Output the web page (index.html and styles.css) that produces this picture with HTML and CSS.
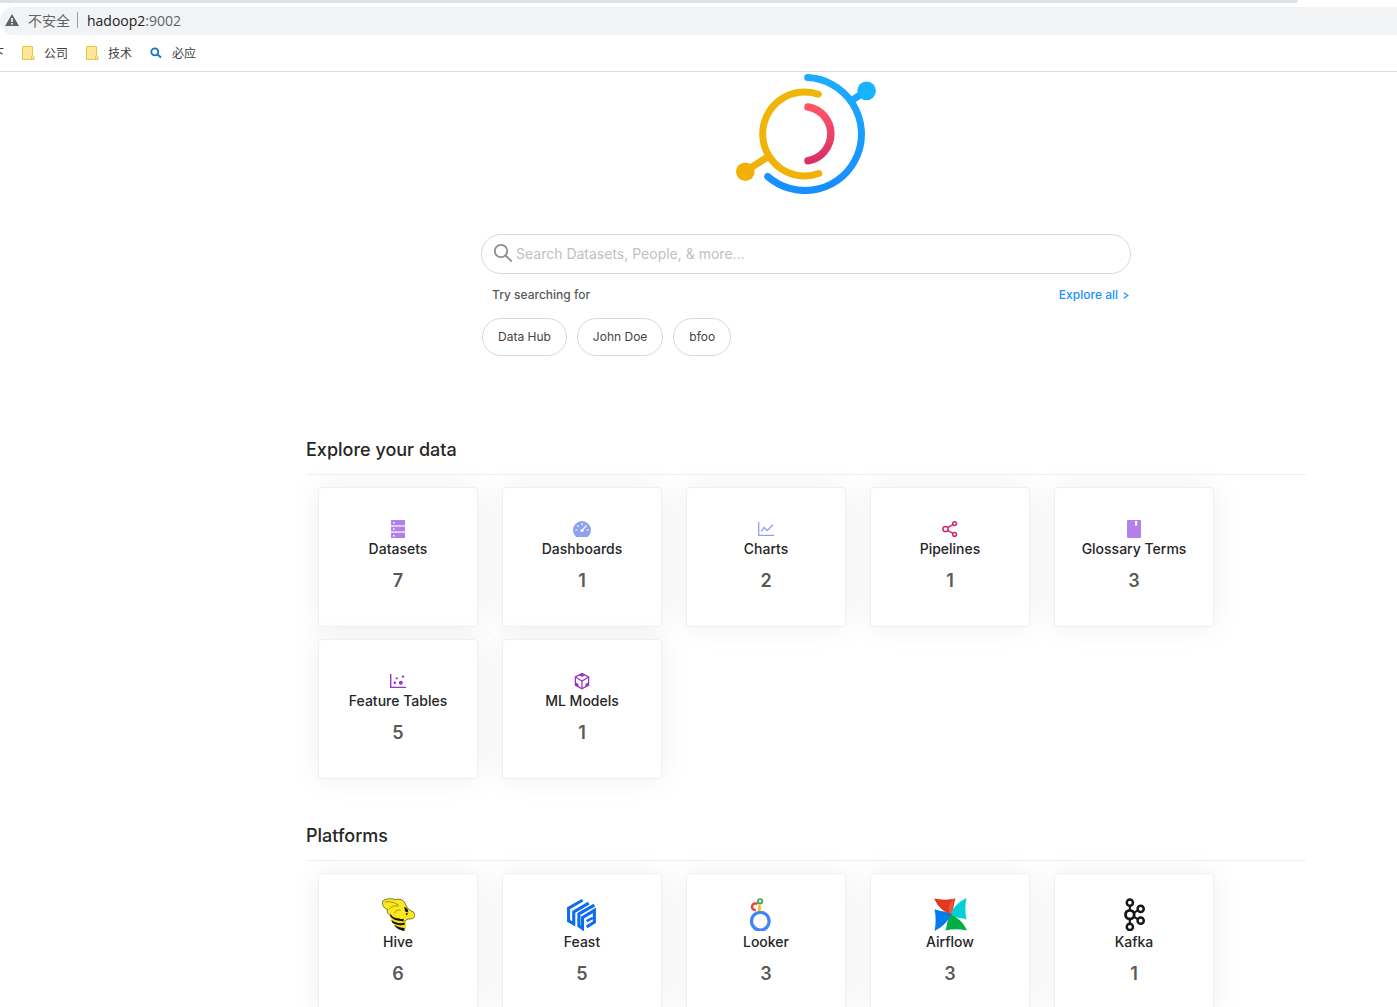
FILE: index.html
```html
<!DOCTYPE html>
<html lang="en">
<head>
<meta charset="utf-8">
<title>DataHub</title>
<link rel="stylesheet" href="styles.css">
</head>
<body>
<header class="chrome">
  <div class="tab-strip"></div>
  <div class="address-bar">
    <svg class="warn" viewBox="0 0 14 12" aria-hidden="true"><path d="M7 0 14 12H0z" fill="#5f6368"/><path d="M6.200 4h1.600v4H6.200zM6.200 9h1.600v1.500H6.200z" fill="#fff"/></svg>
    <span class="insecure">不安全</span>
    <span class="divider"></span>
    <span class="url">hadoop2<span class="port">:9002</span></span>
  </div>
  <nav class="bookmarks">
    <a class="clipped" href="#"><span>下</span></a>
    <a href="#"><svg class="folder" viewBox="0 0 14 16" aria-hidden="true"><path d="M1.500 1.500h10v9l1.500 1V14.500H1.500z" fill="#ffe694" stroke="#e8c64c"/><path d="M10.500 14v-2.500l1-1" fill="none" stroke="#e8c64c"/></svg>公司</a>
    <a href="#"><svg class="folder" viewBox="0 0 14 16" aria-hidden="true"><path d="M1.500 1.500h10v9l1.500 1V14.500H1.500z" fill="#ffe694" stroke="#e8c64c"/><path d="M10.500 14v-2.500l1-1" fill="none" stroke="#e8c64c"/></svg>技术</a>
    <a href="#"><svg class="bing" viewBox="0 0 12 12" fill="none" stroke="#1a73c4" stroke-width="1.800" aria-hidden="true"><circle cx="4.800" cy="4.800" r="3.500"/><path d="m7.500 7.500 3.500 3" stroke-width="2"/></svg>必应</a>
  </nav>
</header>

<main class="page">
  <svg class="logo" viewBox="0 0 140 120" fill="none" stroke-width="7" stroke-linecap="round" role="img" aria-label="DataHub">
    <defs>
      <linearGradient id="blue" x1="0" y1="0" x2="0" y2="1"><stop offset="0" stop-color="#1cacff"/><stop offset="1" stop-color="#198eff"/></linearGradient>
      <linearGradient id="red" x1="0" y1="0" x2="0" y2="1"><stop offset="0" stop-color="#ff5565"/><stop offset="1" stop-color="#da2f67"/></linearGradient>
      <linearGradient id="gold" x1="0" y1="0" x2="0" y2="1"><stop offset="0" stop-color="#edb70a"/><stop offset="1" stop-color="#f2b108"/></linearGradient>
    </defs>
    <path d="M71.700 3.600A56.500 56.500 0 1 1 31.700 102.500" stroke="url(#blue)"/>
    <path d="M115.500 26.500 130.500 17" stroke="#1aa8ff"/><circle cx="130.600" cy="16.800" r="9.300" fill="#18b2ff" stroke="none"/>
    <path d="M82.300 20.200A42 42 0 1 0 82.800 99.500" stroke="url(#gold)"/>
    <path d="M32 82.700 9.500 97.200" stroke="#f0b30a"/><circle cx="9.300" cy="97.700" r="9.300" fill="#f2b006" stroke="none"/>
    <path d="M72 33A27.200 27.200 0 0 1 72 86.700" stroke="url(#red)" stroke-width="7.500"/>
  </svg>

  <section class="search">
    <label class="search-box">
      <svg viewBox="0 0 20 20" fill="none" stroke="#8c8c8c" stroke-width="1.800" aria-hidden="true"><circle cx="8" cy="8" r="6.200"/><path d="m12.500 12.500 6.200 6"/></svg>
      <input type="text" aria-label="Search" placeholder="Search Datasets, People, &amp; more...">
    </label>
    <div class="hint-row">
      <span class="hint">Try searching for</span>
      <a class="explore" href="#">Explore all <svg viewBox="0 0 6 8" fill="none" stroke="currentColor" stroke-width="1.200" aria-hidden="true"><path d="m.8 1.800 4 2.700-4 2.700"/></svg></a>
    </div>
    <div class="chips">
      <button type="button">Data Hub</button>
      <button type="button">John Doe</button>
      <button type="button">bfoo</button>
    </div>
  </section>

  <section class="group">
    <h2>Explore your data</h2>
    <div class="cards">
      <a class="card" href="#"><svg viewBox="0 0 18 18" aria-hidden="true"><path d="M2 0h14v5H2zM2 6.500h14v5H2zM2 13h14v5H2z" fill="#b37feb"/><path d="M2 5h14v1.500H2zM2 11.500h14V13H2z" fill="#e3d0f8"/><path d="M4 2h1.500v1.500H4zM4 8.300h1.500v1.500H4zM4 15h1.500v1.500H4z" fill="#fff"/></svg><span class="name">Datasets</span><span class="count">7</span></a>
      <a class="card" href="#"><svg viewBox="0 0 18 18" aria-hidden="true"><path d="M3.200 17A9 9 0 1 1 14.800 17z" fill="#8fa2ef"/><g stroke="#fff" stroke-width="1.200" fill="none"><path d="M9 3v2.200M2.300 10h2.200M13.500 10h2.200M4.300 5.300l1.400 1.400M9 10.500l4.500-5"/></g><circle cx="9" cy="10.400" r="1.500" fill="#fff"/></svg><span class="name">Dashboards</span><span class="count">1</span></a>
      <a class="card" href="#"><svg viewBox="0 0 18 18" fill="none" stroke="#8fa2ef" stroke-width="1.300" aria-hidden="true"><path d="M1.700 2v13.400H17"/><path d="m4.200 11.500 3-4 3 3 5.800-5.700"/></svg><span class="name">Charts</span><span class="count">2</span></a>
      <a class="card" href="#"><svg viewBox="0 0 18 18" fill="none" stroke="#d6246e" stroke-width="1.500" aria-hidden="true"><circle cx="4.500" cy="9" r="2.600"/><circle cx="13.600" cy="3.600" r="1.900"/><circle cx="13.600" cy="14.400" r="1.900"/><path d="m6.700 7.600 5.200-3M6.700 10.400l5.200 3"/></svg><span class="name">Pipelines</span><span class="count">1</span></a>
      <a class="card" href="#"><svg viewBox="0 0 18 18" aria-hidden="true"><path d="M3 0h12a1 1 0 0 1 1 1v16a1 1 0 0 1-1 1H3a1 1 0 0 1-1-1V1a1 1 0 0 1 1-1z" fill="#b37feb"/><path d="M10 1h2.200v5L11 5.200 10 6z" fill="#fff"/></svg><span class="name">Glossary Terms</span><span class="count">3</span></a>
      <a class="card" href="#"><svg viewBox="0 0 18 18" fill="#9a35bd" aria-hidden="true"><path d="M1 2h1.400v12.700H17V16H1z"/><circle cx="5.800" cy="10.800" r="1.300"/><circle cx="11.800" cy="10.800" r="2"/><circle cx="7.800" cy="6.300" r="1.100"/><circle cx="14" cy="4.600" r="1.200"/></svg><span class="name">Feature Tables</span><span class="count">5</span></a>
      <a class="card" href="#"><svg viewBox="0 0 18 18" fill="none" stroke="#9a35bd" stroke-width="1.300" aria-hidden="true"><path d="M9 1.500 15.600 5v8L9 16.700 2.400 13V5z"/><path d="M2.400 5 9 9l6.600-4M9 9v7.500"/><path d="M9 1 12.500 3 9 5 5.500 3zM2 10l3.500 2v3.200L2 13.400zM16 10l-3.500 2v3.200l3.500-1.800z" fill="#9a35bd" stroke="none"/></svg><span class="name">ML Models</span><span class="count">1</span></a>
    </div>
  </section>

  <section class="group">
    <h2>Platforms</h2>
    <div class="cards platforms">
      <a class="card" href="#"><svg viewBox="0 0 32 32" aria-hidden="true"><path d="M8 13c-1 8 4 17 14 19 2-4 2-9 0-14z" fill="#f5df16"/><path d="M.5 3C4 .5 9 0 13 1.500c3-.8 6-.3 8 1.500 2 3 3 6 5 8l5 3c1.500 3 .5 6-2 6-2 1-3-.5-5 1-3 3-6 1-7-1-3 0-7 0-8.500-3C6 16 4 13 5.500 11 2 10.500 0 7 .5 3z" fill="#fbe81e" stroke="#4a450c" stroke-width=".7" stroke-linejoin="round"/><path d="M3 4c4-1 9 0 13 3M7 11c2-3 6-4 9-3M12 15c1-3 4-4 6-3" fill="none" stroke="#8d820e" stroke-width=".8"/><path d="M8 15c2 4 7 6 13 5v2c-6 1-10-1-13-4zM9 21c3 3 8 4 13 3v2c-5 1-9 0-12-2zM11.500 26c3 2 7 3 10.500 3l-.5 3c-4-.5-7-2-10-6z" fill="#161616"/><path d="M21.500 8.500c3 1 4 3 4 5.500l-3-1z" fill="#111"/><circle cx="24" cy="15.500" r="1" fill="#222"/></svg><span class="name">Hive</span><span class="count">6</span></a>
      <a class="card" href="#"><svg viewBox="0 0 32 32" fill="none" stroke="#0e6cf0" stroke-width="3" aria-hidden="true"><path d="M16 2.200 2.500 9.800v12.400L7.500 25V13.500L22 5"/><path d="M27.500 7 12.500 15.500V27l3.500 2.500V19l11.500-7v11.500L20 28"/><path d="m20 22.500 6-3.300" stroke-width="2.400"/></svg><span class="name">Feast</span><span class="count">5</span></a>
      <a class="card" href="#"><svg viewBox="0 0 32 32" fill="none" aria-hidden="true"><circle cx="10" cy="22.500" r="8.600" stroke="#4285f4" stroke-width="3.200"/><path d="M5.600 11.600A3.200 3.200 0 1 1 7.200 6" stroke="#ea4335" stroke-width="2.400"/><path d="M8.600 6.700c1.300 2 .8 4 .2 6" stroke="#fbbc04" stroke-width="2.600"/><circle cx="9.800" cy="3.200" r="2.200" stroke="#34a853" stroke-width="1.600"/></svg><span class="name">Looker</span><span class="count">3</span></a>
      <a class="card" href="#"><svg viewBox="0 0 32 32" aria-hidden="true">
        <path d="M0 .5C7 2 14 2 21 .5 18.500 6 20 11 16 16 10 14 4 9 0 .5z" fill="#e43921"/>
        <path d="M0 .5C7 2 14 2 21 .5 18.500 6 20 11 16 16 10 14 4 9 0 .5z" fill="#04cfd6" transform="rotate(90 16 16)"/>
        <path d="M0 .5C7 2 14 2 21 .5 18.500 6 20 11 16 16 10 14 4 9 0 .5z" fill="#00ad46" transform="rotate(180 16 16)"/>
        <path d="M0 .5C7 2 14 2 21 .5 18.500 6 20 11 16 16 10 14 4 9 0 .5z" fill="#017cee" transform="rotate(270 16 16)"/>
        <path d="M16 16C13 12 14 6 19 1c-.8 5 0 10-3 15z" fill="#f0563c"/><circle cx="16" cy="16" r="1" fill="#555"/></svg><span class="name">Airflow</span><span class="count">3</span></a>
      <a class="card" href="#"><svg viewBox="0 0 32 32" fill="none" stroke="#161616" stroke-width="2.400" aria-hidden="true"><circle cx="11.500" cy="4.500" r="3"/><circle cx="11.500" cy="16.200" r="4.200" stroke-width="2.800"/><circle cx="11.500" cy="28" r="3"/><circle cx="22" cy="10.500" r="3"/><circle cx="22" cy="22" r="3"/><path d="M11.500 7.500v5M11.500 20.500V25M15.200 14.400l4-2.300M15.200 18.200l4 2.300" stroke-width="2"/></svg><span class="name">Kafka</span><span class="count">1</span></a>
    </div>
  </section>
</main>
</body>
</html>
```
FILE: styles.css
```css
* { box-sizing: border-box; }
body {
  margin: 0;
  height: 100vh;
  display: flex;
  flex-direction: column;
  background: #fff;
  color: #262626;
  font-family: Inter, "Noto Sans CJK SC", sans-serif;
  font-size: 14px;
}
a { color: inherit; text-decoration: none; }
svg { flex: none; display: block; }

/* browser frame */
.chrome {
  flex: none;
  border-bottom: 1px solid #dadce0;
  font-family: "Open Sans", "Noto Sans CJK SC", sans-serif;
}
.tab-strip { height: 3px; margin-right: 99px; background: #dee1e6; border-bottom-right-radius: 6px; }
.address-bar {
  display: flex;
  align-items: center;
  height: 28px;
  margin-top: 4px;
  padding: 0 0 2px 5px;
  background: #f1f3f4;
  border-radius: 14px 0 0 14px;
  color: #5f6368;
}
.warn { width: 14px; height: 12px; margin-right: 9px; }
.divider { width: 1px; height: 16px; margin: 0 9px 0 7px; background: #9a9da1; }
.url { color: #202124; }
.port { color: #5f6368; }
.bookmarks {
  display: flex;
  align-items: center;
  gap: 17px;
  height: 36px;
  color: #3c4043;
  font-size: 12px;
}
.bookmarks a { display: flex; align-items: center; }
.bookmarks .clipped { width: 4px; overflow: hidden; justify-content: flex-end; }
.folder { width: 14px; height: 16px; margin-right: 9px; }
.bing { width: 12px; height: 12px; margin: 0 10px 0 1px; }

/* page */
.page {
  flex: 1;
  min-height: 0;
  overflow-y: auto;
  scrollbar-width: none;
  padding: 2px 0 40px 215px;
}
.logo { width: 140px; height: 120px; margin: 0 auto 40px; }
.search { max-width: 650px; margin: 0 auto; }
.search-box {
  display: flex;
  align-items: center;
  gap: 3px;
  height: 40px;
  padding: 0 11px 2px;
  border: 1px solid #d9d9d9;
  border-radius: 20px;
}
.search-box svg { width: 20px; height: 20px; }
.search-box input {
  flex: 1;
  min-width: 0;
  padding: 0;
  border: 0;
  outline: 0;
  background: none;
  font: inherit;
}
.search-box input::placeholder { color: #bfbfbf; }
.hint-row {
  display: flex;
  justify-content: space-between;
  margin-top: 10px;
  padding: 0 2px 0 11px;
  font-size: 12px;
  font-weight: 500;
  line-height: 22px;
}
.hint { color: #595959; }
.explore { display: flex; align-items: center; gap: 5px; color: #1890ff; }
.explore svg { width: 6px; height: 8px; }
.chips { display: flex; gap: 10px; margin: 12px 0 80px 1px; }
.chips button {
  height: 38px;
  padding: 0 15px 2px;
  border: 1px solid #d9d9d9;
  border-radius: 19px;
  background: #fff;
  color: #434343;
  font: inherit;
  font-size: 12px;
}
.group { max-width: 1000px; margin: 0 auto 43px; }
.group h2 {
  margin: 0;
  padding-bottom: 10px;
  border-bottom: 1px solid #f0f0f0;
  font-size: 18px;
  font-weight: 500;
  line-height: 28px;
}
.cards { display: flex; flex-wrap: wrap; gap: 12px 24px; padding: 12px 12px 0; }
.card {
  display: flex;
  flex-direction: column;
  align-items: center;
  width: 160px;
  height: 140px;
  padding-top: 32px;
  border: 1px solid #f0f0f0;
  border-radius: 4px;
  background: #fff;
  box-shadow: 0 0 30px #efefef;
}
.card svg { width: 18px; height: 18px; }
.name { font-weight: 500; line-height: 22px; }
.count { margin-top: 7px; color: #595959; font-size: 18px; font-weight: 600; line-height: 28px; }
.platforms .card { padding-top: 24px; }
.platforms svg { width: 33px; height: 33px; }
```
